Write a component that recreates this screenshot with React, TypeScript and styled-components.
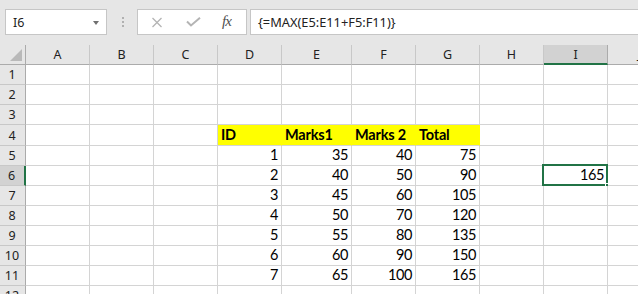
import * as React from 'react'
import styled, { createGlobalStyle, css } from 'styled-components'

const GlobalStyle = createGlobalStyle`
  html, body {
    margin: 0;
    padding: 0;
    background: #e6e6e6;
    overflow: hidden;
  }
`

const UI_FONT = `'Noto Sans', 'Open Sans', sans-serif`
const CELL_FONT = `Lato, 'Noto Sans', sans-serif`
const GREEN = '#217346'

// toolbar
const Toolbar = styled.div`
  display: flex;
  align-items: flex-start;
  height: 45px;
  padding: 9px 0 0 5px;
  box-sizing: border-box;
  background: #e6e6e6;
`

const NameBox = styled.div`
  display: flex;
  align-items: center;
  justify-content: space-between;
  width: 102px;
  height: 26px;
  box-sizing: border-box;
  padding: 0 7px 0 7px;
  background: #fff;
  border: 1px solid #c6c6c6;
  font: 12.5px ${UI_FONT};
  color: #222;
`

const Caret = styled.span`
  width: 0;
  height: 0;
  border-left: 3px solid transparent;
  border-right: 3px solid transparent;
  border-top: 4px solid #707070;
  margin-top: 1px;
`

const Grip = styled.div`
  width: 30px;
  height: 26px;
  display: flex;
  flex-direction: column;
  align-items: center;
  justify-content: center;
  gap: 2px;
  padding-left: 1px;
  box-sizing: border-box;
`

const GripDot = styled.span`
  width: 2px;
  height: 2px;
  background: #b0b0b0;
`

const FxBox = styled.div`
  display: flex;
  align-items: center;
  width: 110px;
  height: 26px;
  box-sizing: border-box;
  margin-right: 3px;
  padding-left: 13px;
  background: #fff;
  border: 1px solid #c6c6c6;
`

const FxSlot = styled.div<{ w: number }>`
  width: ${({ w }) => w}px;
  display: flex;
  align-items: center;
`

const FxLabel = styled.span`
  font: italic 15px 'Liberation Serif', serif;
  color: #505050;
  letter-spacing: -1px;
  margin-top: -2px;
`

const FormulaInput = styled.div`
  flex: 1;
  height: 26px;
  box-sizing: border-box;
  display: flex;
  align-items: center;
  padding-left: 7px;
  background: #fff;
  border: 1px solid #c6c6c6;
  border-right: none;
  font: 12.8px ${UI_FONT};
  color: #222;
  white-space: nowrap;
`

// sheet
const Sheet = styled.div`
  display: grid;
  grid-template-columns: 26px repeat(4, 64px) 70px repeat(5, 64px);
  grid-auto-rows: 20px;
  overflow: hidden;
  width: 638px;
  background: #fff;
`

const Corner = styled.div`
  position: relative;
  background: #e6e6e6;
  border-right: 1px solid #ababab;
  border-bottom: 1px solid #ababab;
  &::after {
    content: '';
    position: absolute;
    right: 3px;
    bottom: 3px;
    width: 0;
    height: 0;
    border-left: 12px solid transparent;
    border-bottom: 12px solid #b9b9b9;
  }
`

const headerText = css`
  font: 12.5px ${UI_FONT};
  color: #222;
  display: flex;
  align-items: center;
  justify-content: center;
  box-sizing: border-box;
`

const ColHead = styled.div<{ selected?: boolean }>`
  ${headerText}
  background: ${({ selected }) => (selected ? '#d2d2d2' : '#e6e6e6')};
  border-right: 1px solid ${({ selected }) => (selected ? '#ababab' : '#c8c8c8')};
  border-bottom: ${({ selected }) => (selected ? `2px solid ${GREEN}` : '1px solid #ababab')};
  padding-top: ${({ selected }) => (selected ? '1px' : '0')};
`

const RowHead = styled.div<{ selected?: boolean }>`
  ${headerText}
  background: ${({ selected }) => (selected ? '#d2d2d2' : '#e6e6e6')};
  border-right: ${({ selected }) => (selected ? `2px solid ${GREEN}` : '1px solid #ababab')};
  border-bottom: 1px solid #c8c8c8;
  padding-right: 1px;
`

const Cell = styled.div<{ align?: 'left' | 'right'; bold?: boolean; fill?: string; selected?: boolean }>`
  position: relative;
  box-sizing: border-box;
  display: flex;
  align-items: flex-end;
  justify-content: ${({ align }) => (align === 'right' ? 'flex-end' : 'flex-start')};
  padding: 0 3px 2px 3px;
  background: ${({ fill }) => fill || '#fff'};
  border-right: 1px solid ${({ fill }) => fill || '#d4d4d4'};
  border-bottom: 1px solid #d4d4d4;
  font: ${({ bold }) => (bold ? 700 : 400)} 14.5px ${CELL_FONT};
  letter-spacing: ${({ bold }) => (bold ? '-0.2px' : '-0.4px')};
  line-height: 16px;
  color: #000;
  white-space: nowrap;

  ${({ selected }) =>
    selected &&
    css`
      &::before {
        content: '';
        position: absolute;
        left: -2px;
        top: -2px;
        right: -1px;
        bottom: -1px;
        border: 2px solid ${GREEN};
        pointer-events: none;
      }
      &::after {
        content: '';
        position: absolute;
        right: -4px;
        bottom: -4px;
        width: 5px;
        height: 5px;
        background: ${GREEN};
        border: 1px solid #fff;
        border-right: none;
        border-bottom: none;
      }
    `}
`

const XIcon = () => (
  <svg width="12" height="11" viewBox="0 0 12 11">
    <path d="M1.5 1 L10.5 10 M10.5 1 L1.5 10" stroke="#b4b4b4" strokeWidth="1.3" fill="none" />
  </svg>
)

const CheckIcon = () => (
  <svg width="15" height="10" viewBox="0 0 15 10">
    <path d="M1 4.5 L5 8.5 L14 0.8" stroke="#b4b4b4" strokeWidth="2" fill="none" />
  </svg>
)

const columns = ['A', 'B', 'C', 'D', 'E', 'F', 'G', 'H', 'I', 'J']
const yellow = '#ffff00'

type CellData = { v: string; align?: 'left' | 'right'; bold?: boolean; fill?: string }

const marks = [
  [1, 35, 40, 75],
  [2, 40, 50, 90],
  [3, 45, 60, 105],
  [4, 50, 70, 120],
  [5, 55, 80, 135],
  [6, 60, 90, 150],
  [7, 65, 100, 165],
]

const buildRow = (r: number): Record<string, CellData> => {
  if (r === 4) {
    return {
      D: { v: 'ID', bold: true, fill: yellow },
      E: { v: 'Marks1', bold: true, fill: yellow },
      F: { v: 'Marks 2', bold: true, fill: yellow },
      G: { v: 'Total', bold: true, fill: yellow },
    }
  }
  const m = marks[r - 5]
  if (!m) return {}
  const row: Record<string, CellData> = {}
  ;['D', 'E', 'F', 'G'].forEach((c, i) => {
    row[c] = { v: String(m[i]), align: 'right' }
  })
  if (r === 6) row.I = { v: '165', align: 'right' }
  return row
}

const rows = Array.from({ length: 12 }, (_, i) => i + 1)

export default function App() {
  return (
    <>
      <GlobalStyle />
      <Toolbar>
        <NameBox>
          <span>I6</span>
          <Caret />
        </NameBox>
        <Grip>
          <GripDot />
          <GripDot />
          <GripDot />
        </Grip>
        <FxBox>
          <FxSlot w={35}>
            <XIcon />
          </FxSlot>
          <FxSlot w={36}>
            <CheckIcon />
          </FxSlot>
          <FxSlot w={20}>
            <FxLabel>fx</FxLabel>
          </FxSlot>
        </FxBox>
        <FormulaInput>{'{=MAX(E5:E11+F5:F11)}'}</FormulaInput>
      </Toolbar>
      <Sheet style={{ gridTemplateRows: '20px 20px 20px 20px 21px' }}>
        <Corner />
        {columns.map((c) => (
          <ColHead key={c} selected={c === 'I'}>
            {c}
          </ColHead>
        ))}
        {rows.map((r) => {
          const data = buildRow(r)
          return (
            <React.Fragment key={r}>
              <RowHead selected={r === 6}>{r}</RowHead>
              {columns.map((c) => {
                const d = data[c]
                return (
                  <Cell
                    key={c}
                    align={d?.align}
                    bold={d?.bold}
                    fill={d?.fill}
                    selected={r === 6 && c === 'I'}
                  >
                    {d?.v}
                  </Cell>
                )
              })}
            </React.Fragment>
          )
        })}
      </Sheet>
    </>
  )
}
